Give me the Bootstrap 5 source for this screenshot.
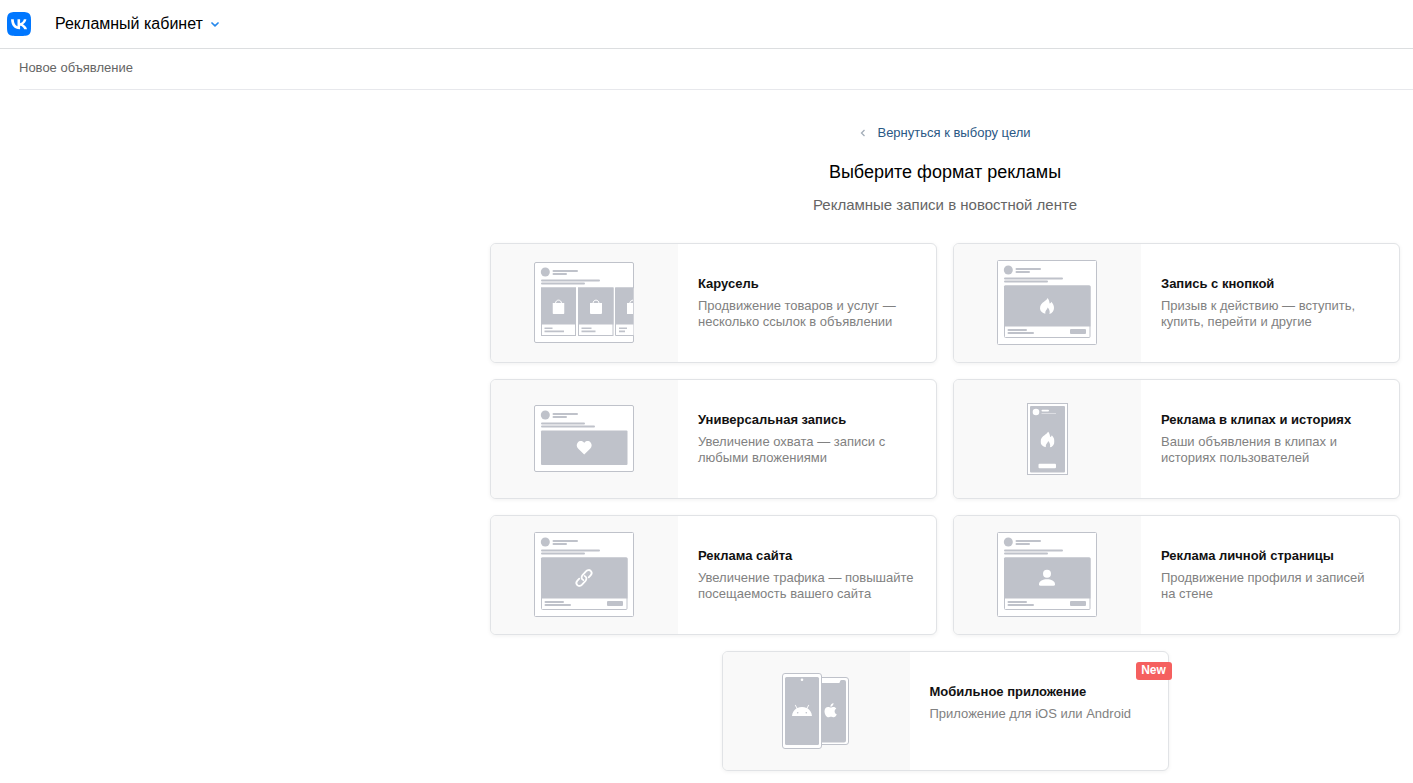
<!DOCTYPE html>
<html lang="ru">
<head>
<meta charset="utf-8">
<meta name="viewport" content="width=device-width, initial-scale=1">
<title>Новое объявление</title>
<link href="https://cdn.jsdelivr.net/npm/bootstrap@5.3.0/dist/css/bootstrap.min.css" rel="stylesheet">
<style>
  body { font-family: "Liberation Sans", Arial, sans-serif; font-size: 13px; line-height: 16px; color: #000; }
  .topbar { height: 49px; border-bottom: 1px solid #dcdee0; padding: 0 7px; gap: 24px; }
  .cabinet-btn { font-size: 16px; line-height: 20px; gap: 8px; color: #000; }
  .crumbs { margin-left: 19px; height: 41px; padding-top: 11px; border-bottom: 1px solid #e7e8ec; color: #656565; }
  .formats { max-width: 936px; padding: 35px 13px 12px; }
  .back-link { color: #2a5885; gap: 12px; line-height: 16px; }
  .formats h1 { font-size: 18px; line-height: 24px; margin: 19px 0 11px; font-weight: 400; }
  .subtitle { font-size: 15px; line-height: 20px; margin-bottom: 28px; color: #656565; }
  .format-card { height: 120px; border: 1px solid #e1e3e6; border-radius: 6px; box-shadow: 0 1px 4px rgba(0,0,0,.06); color: #111; }
  .pic { width: 187px; padding: 0 1px 1px 0; background: #f9f9f9; border-radius: 5px 0 0 5px; }
  .info { padding: 31px 16px 0 20px; }
  .info h2 { font-size: 13px; line-height: 18px; font-weight: 700; margin: 0 0 5px; }
  .info p { margin: 0; color: #818181; max-width: 216px; }
  .new-badge { top: 10px; right: -4px; width: 36px; height: 18px; border-radius: 3px; background: #f5605f; font-size: 12px; line-height: 16px; padding: 0; }
</style>
</head>
<body class="bg-white">
<svg width="0" height="0" class="d-none" aria-hidden="true">
  <symbol id="post-head" viewBox="0 0 100 16">
    <circle cx="11.300" cy="10" r="4.500"/>
    <rect x="18.500" y="8" width="25.500" height="2" rx="1"/>
    <rect x="18.500" y="11" width="14.500" height="2" rx="1"/>
  </symbol>
  <symbol id="bag" viewBox="0 0 12 15">
    <path d="M0 4h12v10q0 1-1 1H1q-1 0-1-1z" fill="#fff"/><path d="M3 4.500C3 0 9 0 9 4.500" fill="none" stroke="#fff"/>
  </symbol>
  <symbol id="fire" viewBox="0 0 14 16">
    <path fill="#fff" d="M7.600 0C8.800 1.500 9.500 3.300 9.600 5.600c.9-.4 1.400-1 1.700-1.900C13.100 5.600 14 7.700 14 9.900c0 3-1.800 5.100-4.600 6.100.7-2.400.2-4.300-1.700-6.500-.6 2.400-2.900 3.200-2.300 6.200C2.100 15 0 13.200 0 10.200 0 6.800 2.100 5 4 3.700 5.600 2.600 7.100 1.500 7.600 0z"/>
  </symbol>
  <symbol id="link-post" viewBox="0 0 100 85">
    <rect x=".5" y=".5" width="99" height="84" rx="1" fill="#fff" stroke="#bfc2ca"/>
    <use href="#post-head" width="100" height="16"/>
    <rect x="7" y="17.500" width="59" height="2" rx="1"/>
    <rect x="7" y="20.500" width="44" height="2" rx="1"/>
    <rect x="7.500" y="26" width="85.500" height="51.500" rx="1" fill="#fff" stroke="#bfc2ca"/>
    <path d="M7 26.500q0-1 1-1h84.500q1 0 1 1v40H7z"/>
    <rect x="10.500" y="69" width="19.500" height="2" rx="1"/>
    <rect x="10.500" y="72" width="26.500" height="2" rx="1"/>
    <rect x="73" y="69" width="16" height="5" rx="1"/>
  </symbol>
</svg>

<header class="topbar d-flex align-items-center">
  <a href="#" aria-label="VK" class="d-flex">
    <svg width="24" height="24" viewBox="0 0 24 24"><path fill="#07f" d="M0 11.500C0 6.100 0 3.400 1.700 1.700S6.100 0 11.500 0h1c5.400 0 8.100 0 9.800 1.700S24 6.100 24 11.500v1c0 5.400 0 8.100-1.700 9.800S17.900 24 12.500 24h-1c-5.400 0-8.100 0-9.800-1.700S0 17.900 0 12.500z"/><path fill="#fff" d="M12.770 17.290C7.300 17.290 4.180 13.540 4.050 7.300h2.740c.09 4.580 2.110 6.520 3.710 6.920V7.300h2.580v3.950c1.580-.17 3.240-1.970 3.800-3.950h2.580c-.43 2.440-2.230 4.240-3.510 4.980 1.280.6 3.330 2.170 4.110 5.010h-2.840c-.61-1.900-2.130-3.370-4.140-3.570v3.570z"/></svg>
  </a>
  <button type="button" class="cabinet-btn btn border-0 p-0 d-flex align-items-center">Рекламный кабинет
    <svg width="8" height="5" viewBox="0 0 8 5" fill="none" stroke="#2688eb" stroke-width="1.700" stroke-linecap="round" stroke-linejoin="round"><path d="M1 1l3 2.800L7 1"/></svg>
  </button>
</header>
<div class="crumbs">Новое объявление</div>

<main class="formats ms-auto">
  <div class="text-center">
    <a href="#" class="back-link d-inline-flex align-items-center text-decoration-none">
      <svg width="6" height="8" viewBox="0 0 6 8" fill="none" stroke="#a3adb8" stroke-width="1.300"><path d="M5.500 1l-3 3 3 3"/></svg>Вернуться к выбору цели</a>
    <h1>Выберите формат рекламы</h1>
    <p class="subtitle">Рекламные записи в новостной ленте</p>
  </div>
  <div class="row g-3 justify-content-center">
    <div class="col-12 col-md-6">
      <a href="#" class="format-card d-flex text-decoration-none bg-white">
        <span class="pic d-flex flex-shrink-0 align-items-center justify-content-center">
          <svg width="100" height="81" viewBox="0 0 100 81" fill="#bfc2ca">
            <rect x=".5" y=".5" width="99" height="80" rx="1.500" fill="#fff" stroke="#bfc2ca"/>
            <use href="#post-head" width="100" height="16"/>
            <rect x="7" y="17.500" width="59" height="2" rx="1"/><rect x="7" y="20.500" width="44" height="2" rx="1"/>
            <g fill="#fff" stroke="#bfc2ca"><rect x="7.500" y="26" width="34" height="47.500"/><rect x="44.500" y="26" width="34.500" height="47.500"/><path d="M99.500 73.500h-18V26h18"/></g>
            <path d="M7 25.500h35v37H7zM44 25.500h35.500v37H44zM81 25.500h18.500v37H81z"/>
            <use href="#bag" x="18.500" y="37" width="12" height="15"/><use href="#bag" x="56" y="37" width="12" height="15"/>
            <path d="M93 41h6v11h-6z" fill="#fff"/><path d="M95.500 41.500q.5-3 3.500-3.500" fill="none" stroke="#fff"/>
            <path d="M10.500 65.500h8V67h-8zM10.500 68.500H30v1.700H10.500zM47.500 65.500h10V67h-10zM47.500 68.500h14v1.700h-14zM85 65.500h8V67h-8zM85 68.500h6v1.700h-6z"/>
          </svg>
        </span>
        <span class="info d-block"><h2>Карусель</h2><p>Продвижение товаров и услуг — несколько ссылок в объявлении</p></span>
      </a>
    </div>
    <div class="col-12 col-md-6">
      <a href="#" class="format-card d-flex text-decoration-none bg-white">
        <span class="pic d-flex flex-shrink-0 align-items-center justify-content-center">
          <svg width="100" height="85" viewBox="0 0 100 85" fill="#bfc2ca"><use href="#link-post"/><use href="#fire" x="43" y="38" width="14" height="16"/></svg>
        </span>
        <span class="info d-block"><h2>Запись с кнопкой</h2><p>Призыв к действию — вступить, купить, перейти и другие</p></span>
      </a>
    </div>
    <div class="col-12 col-md-6">
      <a href="#" class="format-card d-flex text-decoration-none bg-white">
        <span class="pic d-flex flex-shrink-0 align-items-center justify-content-center">
          <svg width="100" height="67" viewBox="0 0 100 67" fill="#bfc2ca">
            <rect x=".5" y=".5" width="99" height="66" rx="1.500" fill="#fff" stroke="#bfc2ca"/>
            <use href="#post-head" width="100" height="16"/>
            <rect x="7" y="17.500" width="44" height="2" rx="1"/><rect x="7" y="20.500" width="54" height="2" rx="1"/>
            <rect x="7" y="25.500" width="86.500" height="34.500" rx="1"/>
            <path fill="#fff" d="M50.200 49.500l-5.900-5.700c-2-2-2-4.700-.5-6.400 1.800-2 5-1.700 6.400.6 1.400-2.300 4.600-2.600 6.400-.6 1.500 1.700 1.500 4.400-.5 6.400z"/>
          </svg>
        </span>
        <span class="info d-block"><h2>Универсальная запись</h2><p>Увеличение охвата — записи с любыми вложениями</p></span>
      </a>
    </div>
    <div class="col-12 col-md-6">
      <a href="#" class="format-card d-flex text-decoration-none bg-white">
        <span class="pic d-flex flex-shrink-0 align-items-center justify-content-center">
          <svg width="41" height="72" viewBox="0 0 41 72" fill="#bfc2ca">
            <rect x=".5" y=".5" width="40" height="71" fill="#fff" stroke="#bfc2ca"/>
            <rect x="3" y="3" width="35" height="66.500" rx="1"/>
            <g fill="#fff"><circle cx="9" cy="9" r="3.300"/><rect x="14.500" y="6.700" width="7.500" height="1.800" rx=".9"/><rect x="14.500" y="10" width="14.500" height="1" opacity=".45"/><rect x="11.500" y="60.700" width="17.500" height="4.600" rx="1"/></g>
            <use href="#fire" x="13.500" y="28.500" width="14" height="16"/>
          </svg>
        </span>
        <span class="info d-block"><h2>Реклама в клипах и историях</h2><p>Ваши объявления в клипах и историях пользователей</p></span>
      </a>
    </div>
    <div class="col-12 col-md-6">
      <a href="#" class="format-card d-flex text-decoration-none bg-white">
        <span class="pic d-flex flex-shrink-0 align-items-center justify-content-center">
          <svg width="100" height="85" viewBox="0 0 100 85" fill="#bfc2ca"><use href="#link-post"/>
            <g fill="none" stroke="#fff" stroke-width="1.800" stroke-linecap="round"><path d="M49.300 48c-1.900-.9-2.300-3.200-.8-4.900l3.700-4c1.400-1.400 3.300-1.400 4.500-.2s1.200 3.100-.1 4.500l-1.900 2"/><path d="M50.700 44c1.900.9 2.300 3.200.8 4.900l-3.700 4c-1.400 1.400-3.300 1.400-4.500.2s-1.200-3.100.1-4.500l1.900-2"/></g></svg>
        </span>
        <span class="info d-block"><h2>Реклама сайта</h2><p>Увеличение трафика — повышайте посещаемость вашего сайта</p></span>
      </a>
    </div>
    <div class="col-12 col-md-6">
      <a href="#" class="format-card d-flex text-decoration-none bg-white">
        <span class="pic d-flex flex-shrink-0 align-items-center justify-content-center">
          <svg width="100" height="85" viewBox="0 0 100 85" fill="#bfc2ca"><use href="#link-post"/>
            <g fill="#fff"><circle cx="50" cy="41.700" r="4"/><path d="M42 52.200c0-3.400 4-5 8-5s8 1.600 8 5q0 1.600-1.500 1.600h-13q-1.500 0-1.500-1.600z"/></g></svg>
        </span>
        <span class="info d-block"><h2>Реклама личной страницы</h2><p>Продвижение профиля и записей на стене</p></span>
      </a>
    </div>
    <div class="col-12 col-md-6">
      <a href="#" class="format-card position-relative d-flex text-decoration-none bg-white">
        <span class="pic d-flex flex-shrink-0 align-items-center justify-content-center">
          <svg width="67" height="76" viewBox="0 0 67 76" fill="#bfc2ca">
            <rect x="30" y="4.500" width="36.500" height="67" rx="2.500" fill="#fff" stroke="#bfc2ca"/>
            <path d="M38 10h18.500q1.500 0 1.500-1.500T59.500 7H62q2 0 2 2v58.500q0 2-2 2H38z"/>
            <rect x=".5" y=".5" width="39" height="75" rx="2.500" fill="#fff" stroke="#bfc2ca"/>
            <rect x="3" y="4" width="34" height="68" rx="1.500"/>
            <circle cx="20" cy="6.700" r="1.300" fill="#fff"/>
            <path fill="#fff" d="M10 43c.3-3.400 2-6.100 4.600-7.700L12.800 32.200l.7-.4 1.900 3.100c2.900-1.300 6.300-1.300 9.200 0l1.900-3.100.7.400-1.800 3.100C28 36.900 29.700 39.600 30 43z"/>
            <circle cx="15.700" cy="39.700" r=".8"/><circle cx="24.300" cy="39.700" r=".8"/>
            <path fill="#fff" d="M51.500 30c.2 2-1.400 3.700-3.100 3.700-.2-1.800 1.400-3.500 3.100-3.700zM48.800 34.600c.8 0 1.500-.7 2.800-.7 1.100 0 2.100.6 2.700 1.500-2.500 1.500-2 4.900.5 5.900-.7 1.700-1.900 3-3.100 3-1 0-1.400-.5-2.700-.5s-1.700.5-2.600.5c-1.800 0-3.900-3.200-3.900-6.100 0-2.700 1.700-4.200 3.500-4.200 1.200 0 2.100.6 2.800.6z"/>
          </svg>
        </span>
        <span class="info d-block"><h2>Мобильное приложение</h2><p>Приложение для iOS или Android</p></span>
        <span class="badge new-badge position-absolute">New</span>
      </a>
    </div>
  </div>
</main>
<script src="https://cdn.jsdelivr.net/npm/bootstrap@5.3.0/dist/js/bootstrap.bundle.min.js"></script>
</body>
</html>
